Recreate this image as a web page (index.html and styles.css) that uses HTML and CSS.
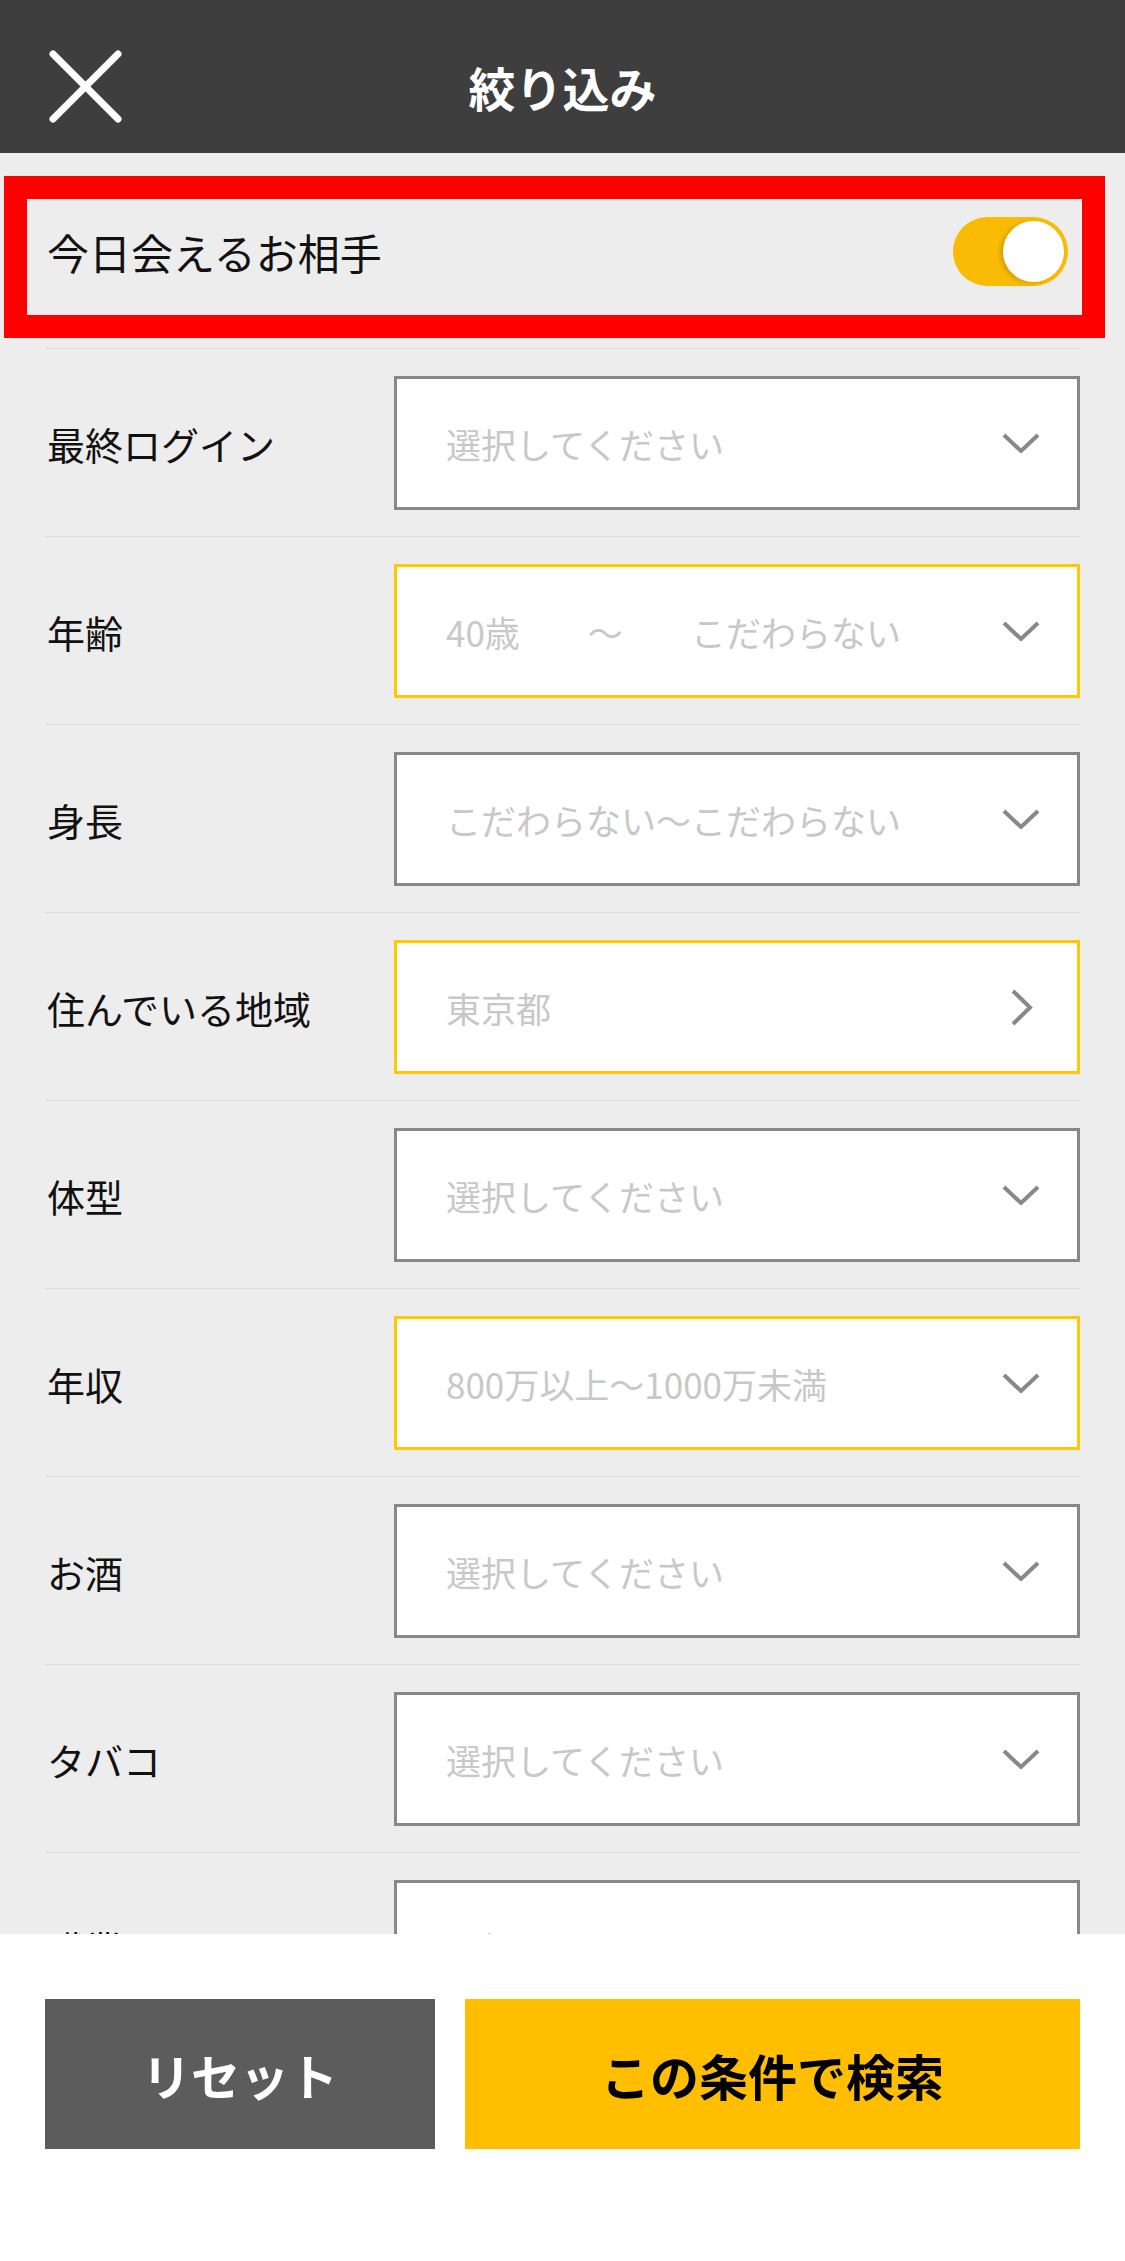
FILE: index.html
```html
<!DOCTYPE html>
<html lang="ja">
<head>
    <meta charset="UTF-8">
    <meta name="viewport" content="width=device-width, initial-scale=1.0">
    <title>絞り込み</title>
    <link rel="stylesheet" href="styles.css">
</head>
<body>

    <header class="topbar">
        <div class="close">
            <svg width="75" height="75" viewBox="0 0 75 75">
                <path d="M5 5 L70 70 M70 5 L5 70" stroke="#fff" stroke-width="7" stroke-linecap="round" fill="none"></path>
            </svg>
        </div>
        <h1 class="title">絞り込み</h1>
        <div></div>
    </header>

    <main class="filters">
        <div class="today">
            <span class="today-label">今日会えるお相手</span>
            <span class="switch"><span class="knob"></span></span>
        </div>

        <div class="row">
            <div class="label">最終ログイン</div>
            <div class="select">
                <span class="value">選択してください</span>
                <svg class="chev" width="38" height="20" viewBox="0 0 38 20"><polyline points="2,2 19,18 36,2"></polyline></svg>
            </div>
        </div>

        <div class="row">
            <div class="label">年齢</div>
            <div class="select set">
                <span class="value range">
                    <span>40歳</span>
                    <span>～</span>
                    <span>こだわらない</span>
                </span>
                <svg class="chev" width="38" height="20" viewBox="0 0 38 20"><polyline points="2,2 19,18 36,2"></polyline></svg>
            </div>
        </div>

        <div class="row">
            <div class="label">身長</div>
            <div class="select">
                <span class="value">こだわらない〜こだわらない</span>
                <svg class="chev" width="38" height="20" viewBox="0 0 38 20"><polyline points="2,2 19,18 36,2"></polyline></svg>
            </div>
        </div>

        <div class="row">
            <div class="label">住んでいる地域</div>
            <div class="select set">
                <span class="value">東京都</span>
                <svg class="chev next" width="23" height="37" viewBox="0 0 23 37"><polyline points="3,2 20,18.5 3,35"></polyline></svg>
            </div>
        </div>

        <div class="row">
            <div class="label">体型</div>
            <div class="select">
                <span class="value">選択してください</span>
                <svg class="chev" width="38" height="20" viewBox="0 0 38 20"><polyline points="2,2 19,18 36,2"></polyline></svg>
            </div>
        </div>

        <div class="row">
            <div class="label">年収</div>
            <div class="select set">
                <span class="value">800万以上〜1000万未満</span>
                <svg class="chev" width="38" height="20" viewBox="0 0 38 20"><polyline points="2,2 19,18 36,2"></polyline></svg>
            </div>
        </div>

        <div class="row">
            <div class="label">お酒</div>
            <div class="select">
                <span class="value">選択してください</span>
                <svg class="chev" width="38" height="20" viewBox="0 0 38 20"><polyline points="2,2 19,18 36,2"></polyline></svg>
            </div>
        </div>

        <div class="row">
            <div class="label">タバコ</div>
            <div class="select">
                <span class="value">選択してください</span>
                <svg class="chev" width="38" height="20" viewBox="0 0 38 20"><polyline points="2,2 19,18 36,2"></polyline></svg>
            </div>
        </div>

        <div class="row">
            <div class="label">職業</div>
            <div class="select">
                <span class="value">選択してください</span>
                <svg class="chev" width="38" height="20" viewBox="0 0 38 20"><polyline points="2,2 19,18 36,2"></polyline></svg>
            </div>
        </div>
    </main>

    <footer class="actions">
        <button class="btn reset">リセット</button>
        <button class="btn search">この条件で検索</button>
    </footer>

</body>
</html>
```

FILE: styles.css
```css
body {
    margin: 0;
    height: 2261px;
    display: flex;
    flex-direction: column;
    overflow: hidden;
    font-family: "Noto Sans CJK JP", "Noto Sans", sans-serif;
    background-color: #ededed;
    color: #111;
}
.topbar {
    height: 153px;
    flex-shrink: 0;
    box-sizing: border-box;
    padding-top: 20px;
    background-color: #3e3e3e;
    display: grid;
    grid-template-columns: 1fr auto 1fr;
    align-items: center;
}
.close {
    padding-left: 48px;
    display: flex;
}
.title {
    margin: 0;
    color: #fff;
    font-size: 47px;
    font-weight: bold;
}
.filters {
    flex: 1;
    overflow: hidden;
}
.today {
    margin: 23px 20px 10px 4px;
    height: 162px;
    box-sizing: border-box;
    border: 23px solid #ff0000;
    display: flex;
    align-items: center;
    justify-content: space-between;
    padding: 0 14px 11px 20px;
}
.today-label {
    font-size: 42px;
}
.switch {
    width: 115px;
    height: 69px;
    border-radius: 35px;
    background-color: #fabb05;
    display: flex;
    align-items: center;
    justify-content: flex-end;
    padding-right: 4px;
    box-sizing: border-box;
}
.knob {
    width: 61px;
    height: 61px;
    border-radius: 50%;
    background-color: #fff;
    box-shadow: -3px 1px 4px rgba(0, 0, 0, 0.15);
}
.row {
    margin: 0 45px;
    border-top: 1px solid #dadada;
    padding: 27px 0 26px;
    display: grid;
    grid-template-columns: 349px 1fr;
    align-items: center;
}
.label {
    padding-left: 2px;
    font-size: 38px;
}
.select {
    height: 134px;
    box-sizing: border-box;
    border: 3px solid #888;
    background-color: #fff;
    display: flex;
    align-items: center;
    padding: 0 37px 0 49px;
}
.select.set {
    border-color: #ffc800;
}
.value {
    flex: 1;
    font-size: 35px;
    color: #c8c8c8;
}
.range {
    display: flex;
    gap: 68px;
}
.chev {
    fill: none;
    stroke: #888;
    stroke-width: 4;
}
.chev.next {
    margin-right: 7px;
}
.actions {
    height: 327px;
    flex-shrink: 0;
    box-sizing: border-box;
    background-color: #fff;
    display: flex;
    gap: 30px;
    padding: 65px 45px 0;
    align-items: flex-start;
}
.btn {
    border: none;
    height: 150px;
    font-family: inherit;
    font-size: 49px;
    font-weight: bold;
}
.reset {
    width: 390px;
    background-color: #5c5c5c;
    color: #fff;
}
.search {
    flex: 1;
    background-color: #ffbe00;
    color: #000;
}
```
